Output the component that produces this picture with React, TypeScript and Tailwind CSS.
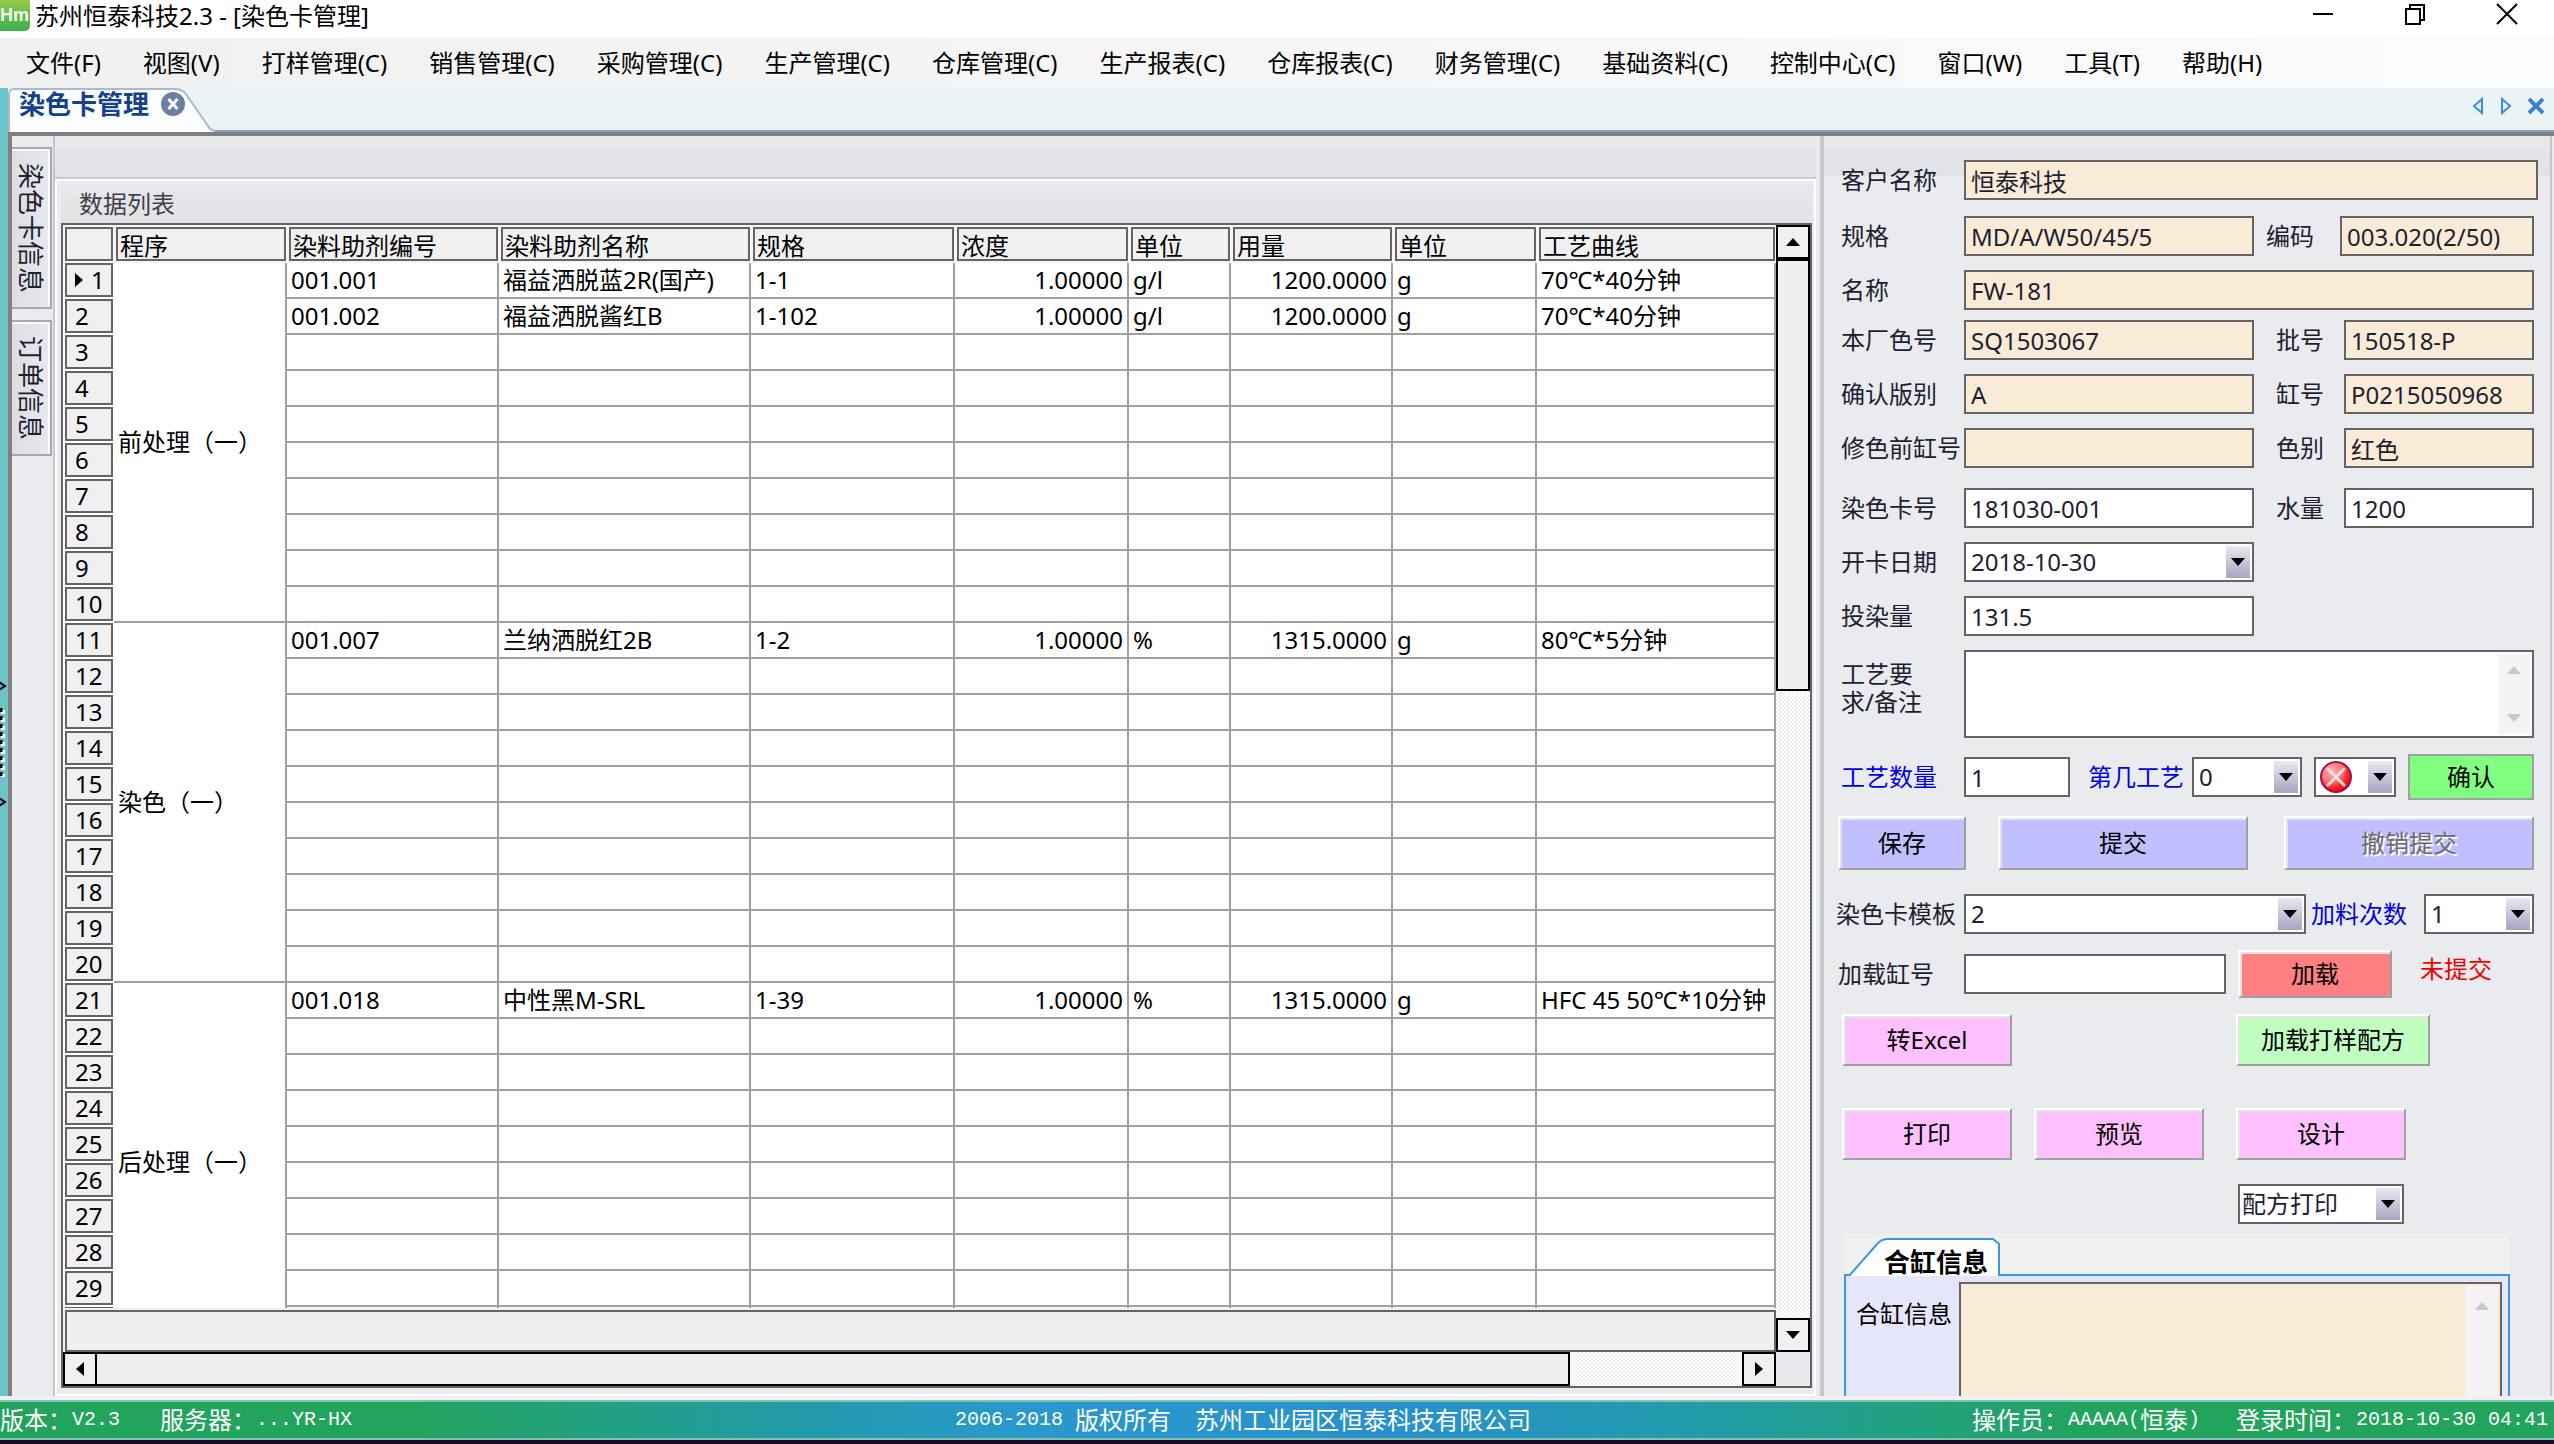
import React from 'react';

const menus = [
  '文件(F)', '视图(V)', '打样管理(C)', '销售管理(C)', '采购管理(C)', '生产管理(C)', '仓库管理(C)', '生产报表(C)',
  '仓库报表(C)', '财务管理(C)', '基础资料(C)', '控制中心(C)', '窗口(W)', '工具(T)', '帮助(H)',
];

const columns = ['程序', '染料助剂编号', '染料助剂名称', '规格', '浓度', '单位', '用量', '单位', '工艺曲线'];

const ROWS_PER_STAGE = 10;
const LAST_ROW = 29;
const stages = ['前处理（一）', '染色（一）', '后处理（一）'];

// row index -> cells after 程序
const data: Record<number, string[]> = {
  0: ['001.001', '福益洒脱蓝2R(国产)', '1-1', '1.00000', 'g/l', '1200.0000', 'g', '70℃*40分钟'],
  1: ['001.002', '福益洒脱酱红B', '1-102', '1.00000', 'g/l', '1200.0000', 'g', '70℃*40分钟'],
  10: ['001.007', '兰纳洒脱红2B', '1-2', '1.00000', '%', '1315.0000', 'g', '80℃*5分钟'],
  20: ['001.018', '中性黑M-SRL', '1-39', '1.00000', '%', '1315.0000', 'g', 'HFC 45 50℃*10分钟'],
};
const emptyCells = ['', '', '', '', '', '', '', ''];

const dither = 'bg-[repeating-conic-gradient(#efefef_0_25%,#ffffff_0_50%)] bg-size-[4px_4px]';

type Dir = 'up' | 'down' | 'left' | 'right';

function Arrow({ dir, className = 'fill-black' }: { dir: Dir; className?: string }) {
  const paths = {
    up: 'M0 8L7 0L14 8Z',
    down: 'M0 0H14L7 8Z',
    left: 'M8 0V14L0 7Z',
    right: 'M0 0V14L8 7Z',
  };
  const flat = dir === 'up' || dir === 'down';
  return (
    <svg width={flat ? 14 : 8} height={flat ? 8 : 14} className={className}>
      <path d={paths[dir]} />
    </svg>
  );
}

interface FieldProps {
  label: string;
  value?: string;
  locked?: boolean;
  blue?: boolean;
  labelClass?: string;
  className?: string;
}

const labelBase = 'shrink-0 whitespace-nowrap leading-7';
const boxBase = 'h-10 min-w-0 border-2 border-[#646464] px-[5px] text-2xl leading-9 outline-none';

function Field({ label, value = '', locked, blue, labelClass = 'w-[123px]', className = 'flex-1' }: FieldProps) {
  const id = React.useId();
  return (
    <>
      <label htmlFor={id} className={`${labelBase} ${labelClass} ${blue ? 'text-[#0000e6]' : ''}`}>{label}</label>
      <input
        id={id}
        type="text"
        defaultValue={value}
        readOnly={locked}
        className={`${boxBase} ${locked ? 'bg-[#faebd7]' : 'bg-white'} ${className}`}
      />
    </>
  );
}

function DropMark() {
  return (
    <span className="pointer-events-none absolute top-1 right-1 bottom-1 flex w-6 items-center justify-center bg-linear-to-b from-[#e9e9f2] to-[#a5a5c2]">
      <Arrow dir="down" />
    </span>
  );
}

function SelectField({ label, value, blue, labelClass = 'w-[123px]', className = 'flex-1' }: FieldProps) {
  const id = React.useId();
  return (
    <>
      <label htmlFor={id} className={`${labelBase} ${labelClass} ${blue ? 'text-[#0000e6]' : ''}`}>{label}</label>
      <div className={`relative ${className}`}>
        <select id={id} className={`${boxBase} block w-full appearance-none bg-white`}>
          <option>{value}</option>
        </select>
        <DropMark />
      </div>
    </>
  );
}

function RaisedButton({ children, className, disabled }: { children: React.ReactNode; className: string; disabled?: boolean }) {
  return (
    <button
      type="button"
      disabled={disabled}
      className={`border-2 border-t-white border-r-[#a0a0a0] border-b-[#a0a0a0] border-l-white text-center shadow-[inset_2px_2px_0_#e3e3e3] ${
        disabled ? 'text-[#6d6d6d] [text-shadow:2px_2px_0_#fff]' : 'text-black'
      } ${className}`}
    >
      {children}
    </button>
  );
}

function TitleBar() {
  return (
    <header className="flex h-[38px] items-start bg-white">
      <svg width="30" height="32" viewBox="0 0 30 32" className="shrink-0">
        <defs>
          <linearGradient id="logo" x1="0" y1="0" x2="0" y2="1">
            <stop offset="0" stopColor="#a8d04a" />
            <stop offset="0.45" stopColor="#6cbf4c" />
            <stop offset="1" stopColor="#3fae4f" />
          </linearGradient>
        </defs>
        <rect x="-6" y="-4" width="36" height="35" rx="5" fill="url(#logo)" />
        <text x="0" y="21" fontSize="18" fontWeight="700" fill="#f2f8ee" fontFamily="Liberation Sans, sans-serif">Hm</text>
      </svg>
      <h1 className="ml-[5px] leading-8 text-black">苏州恒泰科技2.3 - [染色卡管理]</h1>
      <div className="ml-auto flex h-7 items-center gap-[70px] pr-9">
        <button type="button" aria-label="最小化">
          <svg width="22" height="22" stroke="#000" strokeWidth="2"><path d="M1 11H21" /></svg>
        </button>
        <button type="button" aria-label="还原">
          <svg width="22" height="22" fill="none" stroke="#000" strokeWidth="2"><path d="M2 6H16V21H2ZM6 6V2H20V17H16" /></svg>
        </button>
        <button type="button" aria-label="关闭">
          <svg width="22" height="22" stroke="#000" strokeWidth="2"><path d="M1 1L21 21M21 1L1 21" /></svg>
        </button>
      </div>
    </header>
  );
}

function MenuBar() {
  return (
    <nav className="flex h-[50px] items-center gap-[42px] bg-linear-to-r from-[#f0f0f0] to-[#fcfcfc] pl-[26px] text-black">
      {menus.map((m) => (
        <button key={m} type="button" className="whitespace-nowrap">{m}</button>
      ))}
    </nav>
  );
}

function TabStrip() {
  return (
    <div className="flex h-11 border-b-2 border-[#8fa4c4] bg-[#ecf3f4]">
      <div className="-mb-0.5 w-2 bg-[#6cc4c8]" />
      <div className="relative h-11 w-[208px]">
        <svg width="208" height="44" className="absolute inset-0">
          <path d="M1 44V6Q1 1 6 1H168Q176 1 182 12L200 38Q202 42 207 43V44Z" fill="#fbfdfe" />
          <path d="M1 44V6Q1 1 6 1H168Q176 1 182 12L200 38Q202 42 207 43" fill="none" stroke="#a9b9cf" strokeWidth="2" />
        </svg>
        <div className="relative flex items-center pl-[11px]">
          <span className="text-[26px] leading-8 font-bold text-[#15428b]">染色卡管理</span>
          <button type="button" aria-label="关闭标签" className="ml-3">
            <svg width="24" height="24" viewBox="0 0 24 24">
              <circle cx="12" cy="12" r="12" fill="#6b7ea3" />
              <path d="M7.5 7L16.500 17M16.500 7L7.500 17" stroke="#fff" strokeWidth="3" />
            </svg>
          </button>
        </div>
      </div>
      <div className="ml-auto flex items-center gap-4 pr-2.5 pb-1.5">
        <button type="button" aria-label="上一个">
          <svg width="12" height="18" fill="none" stroke="#3a8ee6" strokeWidth="2"><path d="M10 2V16L2 9Z" /></svg>
        </button>
        <button type="button" aria-label="下一个">
          <svg width="12" height="18" fill="none" stroke="#3a8ee6" strokeWidth="2"><path d="M2 2V16L10 9Z" /></svg>
        </button>
        <button type="button" aria-label="关闭当前">
          <svg width="16" height="16" fill="none" stroke="#3a80d8" strokeWidth="4"><path d="M1 1L15 15M15 1L1 15" /></svg>
        </button>
      </div>
    </div>
  );
}

function SideTabs() {
  return (
    <aside className="flex">
      <div className="flex w-2 flex-col justify-center bg-[#6cc4c8] pb-[38px]">
        <svg width="8" height="132" viewBox="0 0 8 132">
          <path d="M-4 1L5 7L-4 13M-4 117L5 123L-4 129" fill="#6f9fd8" stroke="#000" strokeWidth="2" />
          <path d="M3 31V98" stroke="#fff" strokeWidth="4" strokeDasharray="4 4" />
          <path d="M1 29V98" stroke="#000" strokeWidth="3" strokeDasharray="4 4" />
        </svg>
      </div>
      <div className="flex w-[45px] flex-col gap-[11px] border-t-4 border-l-4 border-[#808080] bg-[#eaebef] pt-[11px]">
        {['染色卡信息', '订单信息'].map((t) => (
          <button
            key={t}
            type="button"
            className="flex w-10 justify-center border-2 border-l-0 border-[#a4a8b2] bg-linear-to-r from-[#dcdee3] to-[#e8e9ed] py-[14px] shadow-[inset_-2px_2px_0_#fafafc]"
          >
            <span className="text-[26px] leading-8 text-[#1e1e32] [text-orientation:sideways] [writing-mode:vertical-rl]">{t}</span>
          </button>
        ))}
      </div>
    </aside>
  );
}

function DataGrid() {
  const cell = 'h-9 truncate border-r-2 border-b-2 border-[#a0a0a0] px-1 leading-[34px]';
  return (
    <div className="flex min-h-0 flex-1 flex-col border-2 border-[#646464] bg-[#f0f0f0]">
      <div className="flex min-h-0 flex-1">
        <div className="flex min-w-0 flex-1 flex-col">
          <div className="min-h-0 flex-1 overflow-hidden">
            <table className="w-full table-fixed border-separate border-spacing-0 bg-white text-black">
              <colgroup>
                <col className="w-[51px]" />
                <col className="w-[173px]" />
                <col className="w-[212px]" />
                <col className="w-[252px]" />
                <col className="w-[204px]" />
                <col className="w-[174px]" />
                <col className="w-[102px]" />
                <col className="w-[162px]" />
                <col className="w-[144px]" />
                <col />
              </colgroup>
              <thead>
                <tr>
                  <th className="h-[38px] bg-[#f5f5f5] p-0 pt-0.5 pr-px pb-0.5 pl-0.5">
                    <div className="h-[34px] border-2 border-[#646464] bg-[#f0f0f0]" />
                  </th>
                  {columns.map((c, i) => (
                    <th key={i} className="h-[38px] bg-[#f5f5f5] p-0 pt-0.5 pr-px pb-0.5 pl-0.5 text-left font-normal">
                      <div className="h-[34px] truncate border-2 border-[#646464] bg-[#f0f0f0] pl-0.5 leading-[34px]">{c}</div>
                    </th>
                  ))}
                </tr>
              </thead>
              <tbody>
                {Array.from({ length: stages.length * ROWS_PER_STAGE }, (_, r) => (
                  <tr key={r}>
                    <th className="h-9 p-0 pr-px pb-0.5 pl-0.5 text-left font-normal">
                      <div className="flex h-[34px] items-center border-2 border-[#646464] bg-[#f0f0f0] pl-2">
                        {r === 0 && <Arrow dir="right" className="mr-2 shrink-0 fill-black" />}
                        {r < LAST_ROW && r + 1}
                      </div>
                    </th>
                    {r % ROWS_PER_STAGE === 0 && (
                      <td rowSpan={ROWS_PER_STAGE} className="border-r-2 border-b-2 border-[#a0a0a0] p-0 pl-1 align-middle">
                        {stages[r / ROWS_PER_STAGE]}
                      </td>
                    )}
                    {(data[r] ?? emptyCells).map((v, i) => (
                      <td key={i} className={`${cell} ${i === 3 || i === 5 ? 'text-right' : ''}`}>{v}</td>
                    ))}
                  </tr>
                ))}
              </tbody>
            </table>
          </div>
          <div className="mt-0.5 ml-0.5 h-[42px] shrink-0 border-2 border-[#646464] bg-[#efefef]" />
        </div>
        <div className={`flex w-[34px] shrink-0 flex-col ${dither}`}>
          <button type="button" aria-label="向上" className="flex h-[34px] items-center justify-center border-2 border-black bg-[#f0f0f0]">
            <Arrow dir="up" />
          </button>
          <div className="h-[432px] border-2 border-black bg-[#efefef]" />
          <button type="button" aria-label="向下" className="mt-auto flex h-[34px] items-center justify-center border-2 border-black bg-[#f0f0f0]">
            <Arrow dir="down" />
          </button>
        </div>
      </div>
      <div className="flex h-[34px] shrink-0">
        <div className={`flex flex-1 ${dither}`}>
          <button type="button" aria-label="向左" className="flex w-[34px] items-center justify-center border-2 border-black bg-[#f0f0f0]">
            <Arrow dir="left" />
          </button>
          <div className="w-[86%] border-2 border-l-0 border-black bg-[#eeeeee]" />
          <button type="button" aria-label="向右" className="ml-auto flex w-[34px] items-center justify-center border-2 border-black bg-[#f0f0f0]">
            <Arrow dir="right" />
          </button>
        </div>
        <div className="w-[34px] bg-[#e8eaee]" />
      </div>
    </div>
  );
}

function CardForm() {
  const process = React.useId();
  const merged = React.useId();
  return (
    <form className="flex w-[730px] shrink-0 flex-col overflow-hidden border-l-4 border-[#c4c6cf] bg-[#eaebef] bg-[linear-gradient(#e8e9ec,#e0e2e6)] bg-size-[100%_40px] bg-no-repeat pt-6 pr-4 pl-[17px] text-[#1e1e32]">
      <div className="-mr-1 flex h-10 items-center"><Field label="客户名称" value="恒泰科技" locked /></div>
      <div className="mt-4 flex h-10 items-center">
        <Field label="规格" value="MD/A/W50/45/5" locked />
        <Field label="编码" value="003.020(2/50)" locked labelClass="w-[86px] pl-3" className="w-[194px]" />
      </div>
      <div className="mt-3.5 flex h-10 items-center"><Field label="名称" value="FW-181" locked /></div>
      <div className="mt-2.5 flex h-10 items-center">
        <Field label="本厂色号" value="SQ1503067" locked />
        <Field label="批号" value="150518-P" locked labelClass="w-[90px] pl-[22px]" className="w-[190px]" />
      </div>
      <div className="mt-3.5 flex h-10 items-center">
        <Field label="确认版别" value="A" locked />
        <Field label="缸号" value="P0215050968" locked labelClass="w-[90px] pl-[22px]" className="w-[190px]" />
      </div>
      <div className="mt-3.5 flex h-10 items-center">
        <Field label="修色前缸号" locked />
        <Field label="色别" value="红色" locked labelClass="w-[90px] pl-[22px]" className="w-[190px]" />
      </div>
      <div className="mt-5 flex h-10 items-center">
        <Field label="染色卡号" value="181030-001" />
        <Field label="水量" value="1200" labelClass="w-[90px] pl-[22px]" className="w-[190px]" />
      </div>
      <div className="mt-3.5 flex h-10 items-center"><SelectField label="开卡日期" value="2018-10-30" className="w-[290px]" /></div>
      <div className="mt-3.5 flex h-10 items-center"><Field label="投染量" value="131.5" className="w-[290px]" /></div>
      <div className="mt-3.5 flex h-[88px]">
        <label htmlFor={process} className={`${labelBase} w-[123px] pt-2.5`}>工艺要<br />求/备注</label>
        <div className="relative h-full flex-1">
          <textarea id={process} className="block h-full w-full resize-none border-2 border-[#646464] bg-white p-1" />
          <span className="pointer-events-none absolute top-1 right-1 bottom-1 flex w-8 flex-col items-center justify-between bg-[#f4f4f6] py-3">
            <Arrow dir="up" className="fill-[#c8c8cc]" />
            <Arrow dir="down" className="fill-[#c8c8cc]" />
          </span>
        </div>
      </div>
      <div className="mt-4 flex h-[46px] items-center">
        <Field label="工艺数量" value="1" blue className="w-[106px]" />
        <SelectField label="第几工艺" value="0" blue labelClass="w-[122px] pl-[18px]" className="w-[110px]" />
        <button type="button" aria-label="状态" className="relative ml-3 h-10 w-[82px] border-2 border-[#646464] bg-white pl-[3px]">
          <svg width="34" height="34" viewBox="0 0 34 34">
            <defs>
              <radialGradient id="stop" cx="0.35" cy="0.3" r="0.75">
                <stop offset="0" stopColor="#ffb4b4" />
                <stop offset="0.5" stopColor="#fb7070" />
                <stop offset="0.75" stopColor="#fb2424" />
                <stop offset="1" stopColor="#e80010" />
              </radialGradient>
            </defs>
            <circle cx="17" cy="17" r="15" fill="url(#stop)" stroke="#a0104c" strokeWidth="2" />
            <path d="M9 9L25 25M25 9L9 25" stroke="#ffe0e0" strokeWidth="3" strokeLinecap="round" />
          </svg>
          <span className="pointer-events-none absolute top-0.5 right-0.5 bottom-0.5 flex w-6 items-center justify-center bg-linear-to-b from-[#e9e9f2] to-[#a5a5c2]">
            <Arrow dir="down" />
          </span>
        </button>
        <button type="button" className="ml-3 h-full w-[126px] border-2 border-[#a0a0a0] bg-[#80ff80] text-black">确认</button>
      </div>
      <div className="mt-4 -ml-[3px] flex h-[54px]">
        <RaisedButton className="w-32 bg-[#c0c0ff]">保存</RaisedButton>
        <RaisedButton className="ml-8 w-[250px] bg-[#c0c0ff]">提交</RaisedButton>
        <RaisedButton className="ml-auto w-[250px] bg-[#c0c0ff]" disabled>撤销提交</RaisedButton>
      </div>
      <div className="mt-6 -ml-[5px] flex h-10 items-center">
        <SelectField label="染色卡模板" value="2" labelClass="w-32" />
        <SelectField label="加料次数" value="1" blue labelClass="w-[118px] pl-[5px]" className="w-[110px]" />
      </div>
      <div className="mt-4 -ml-[3px] flex h-12 items-center">
        <Field label="加载缸号" labelClass="w-[126px]" className="w-[262px]" />
        <RaisedButton className="ml-3 h-full w-[154px] bg-[#ff8080]">加载</RaisedButton>
        <span className="ml-7 pb-2.5 text-[#f00000]">未提交</span>
      </div>
      <div className="mt-4 grid h-[52px] grid-cols-[192px_202px_170px] pl-px">
        <RaisedButton className="w-[170px] bg-[#ffc0ff]">转Excel</RaisedButton>
        <RaisedButton className="col-start-3 w-[194px] bg-[#c0ffc0]">加载打样配方</RaisedButton>
      </div>
      <div className="mt-[42px] grid h-[52px] grid-cols-[192px_202px_170px] pl-px">
        <RaisedButton className="w-[170px] bg-[#ffc0ff]">打印</RaisedButton>
        <RaisedButton className="w-[170px] bg-[#ffc0ff]">预览</RaisedButton>
        <RaisedButton className="w-[170px] bg-[#ffc0ff]">设计</RaisedButton>
      </div>
      <div className="relative mt-6 ml-[397px] w-[166px]">
        <select aria-label="打印类型" className="block h-10 w-full appearance-none border-2 border-[#646464] bg-white px-0.5 text-2xl leading-9 outline-none">
          <option>配方打印</option>
        </select>
        <DropMark />
      </div>
      <div className="mt-2.5 mr-6 ml-[3px] flex min-h-0 flex-1 flex-col">
        <div className="h-10 shrink-0 bg-[#f0f0f0] pt-1">
          <div className="relative z-10 h-[38px] w-[156px]">
            <svg width="156" height="38" className="absolute inset-0">
              <path d="M5 38L34 5Q38 1 44 1H149L155 6V38" fill="#fff" stroke="#3c96e6" strokeWidth="2" />
            </svg>
            <span className="relative block pt-2 pl-10 text-[26px] leading-8 font-bold text-black">合缸信息</span>
          </div>
        </div>
        <div className="flex min-h-0 flex-1 border-2 border-b-0 border-[#3c96e6] bg-[#e6e6fa] pt-1.5 pr-1.5 pl-2.5 text-black">
          <label htmlFor={merged} className="w-[103px] pt-[18px] leading-7">合缸信息</label>
          <div className="relative flex-1">
            <textarea id={merged} readOnly className="block h-full w-full resize-none border-2 border-b-0 border-[#646464] bg-[#faebd7] p-1" />
            <span className="pointer-events-none absolute top-1 right-1 bottom-0 flex w-8 flex-col items-center bg-[#f4f4f6] pt-4">
              <Arrow dir="up" className="fill-[#c8c8cc]" />
            </span>
          </div>
        </div>
      </div>
    </form>
  );
}

function StatusBar() {
  const latin = "font-['Liberation_Mono','Noto_Sans_CJK_SC',monospace] text-xl";
  return (
    <footer className="flex h-10 items-center border-y-2 border-[#7cc4b4] bg-[linear-gradient(90deg,#22a45c_0%,#22a45c_16%,#249aac_32%,#2a98cc_40%,#2a90cc_54%,#229cac_66%,#22a45c_82%)] text-white">
      <div className="flex flex-1 items-center">
        <span>版本：</span><span className={latin}>V2.3</span>
        <span className="ml-10">服务器：</span><span className={latin}>...YR-HX</span>
      </div>
      <div className="mr-[62px] flex items-center gap-3">
        <span className={latin}>2006-2018</span><span>版权所有</span><span className="ml-3">苏州工业园区恒泰科技有限公司</span>
      </div>
      <div className="flex flex-1 items-center justify-end pr-1.5">
        <span>操作员：</span><span className={latin}>AAAAA(</span><span>恒泰</span><span className={latin}>)</span>
        <span className="ml-9">登录时间：</span><span className={latin}>2018-10-30 04:41</span>
      </div>
    </footer>
  );
}

export default function App() {
  return (
    <div className="flex h-screen flex-col overflow-hidden bg-white font-['Noto_Sans','Noto_Sans_CJK_SC',sans-serif] text-2xl">
      <TitleBar />
      <MenuBar />
      <TabStrip />
      <main className="flex min-h-0 flex-1 border-b-4 border-[#f0f0f0]">
        <SideTabs />
        <div className="flex min-w-0 flex-1 border-t-4 border-[#808080]">
          <section className="flex min-w-0 flex-1 flex-col border-l-2 border-[#c4c6cf] bg-[#eaebef] pr-1">
            <div className="h-[43px] shrink-0 border-b-2 border-[#c8cad2] bg-linear-to-b from-[#e8e9ec] to-[#e0e2e6]" />
            <div className="flex min-h-0 flex-1 flex-col border-2 border-white pr-0.5 pb-1.5 pl-1">
              <h2 className="h-[42px] shrink-0 bg-linear-to-b from-[#e8e9ec] to-[#e0e2e6] pl-[18px] leading-[46px] text-[#404048]">数据列表</h2>
              <DataGrid />
            </div>
          </section>
          <CardForm />
          <div className="w-1 border-l-2 border-[#c4c6cf] bg-[#eaebef]" />
        </div>
      </main>
      <StatusBar />
      <div className="h-1 bg-[#1a0c24]" />
    </div>
  );
}
